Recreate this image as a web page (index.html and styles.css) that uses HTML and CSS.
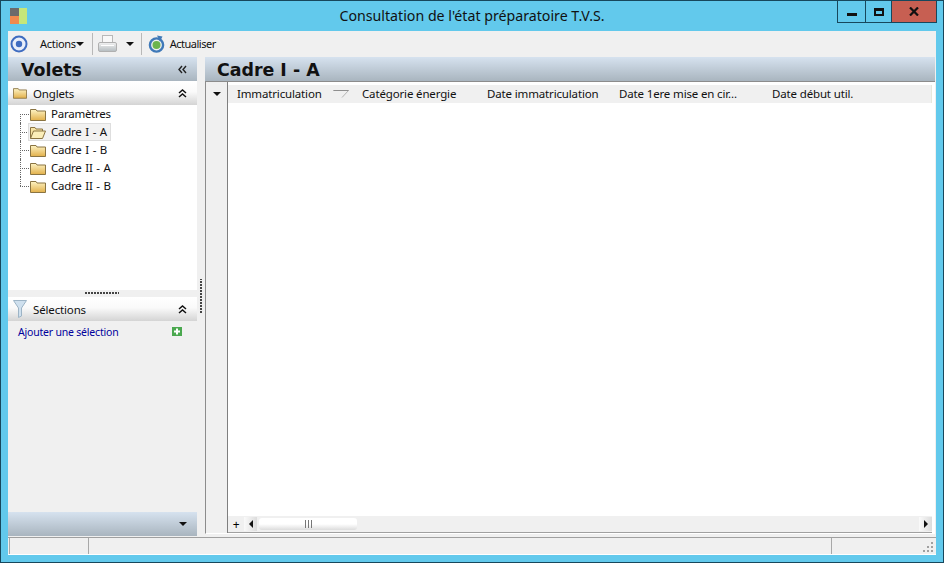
FILE: index.html
```html
<!DOCTYPE html>
<html lang="fr">
<head>
    <meta charset="UTF-8">
    <meta name="viewport" content="width=device-width, initial-scale=1.0">
    <title>Consultation de l'état préparatoire T.V.S.</title>
    <link rel="stylesheet" href="styles.css">
</head>
<body>
<svg class="defs" width="0" height="0">
    <defs>
        <linearGradient id="folderFill" x1="0" y1="0" x2="0" y2="1">
            <stop offset="0" stop-color="#fdf3c4"/>
            <stop offset="1" stop-color="#e2b04a"/>
        </linearGradient>
        <linearGradient id="printFill" x1="0" y1="0" x2="0" y2="1">
            <stop offset="0" stop-color="#f2f2f2"/>
            <stop offset="1" stop-color="#b4bcc0"/>
        </linearGradient>
        <symbol id="folder" viewBox="0 0 16 13">
            <path d="M0.5 12.5V1.5H6L7 3H15.5V12.5Z" fill="url(#folderFill)" stroke="#8a7442"/>
        </symbol>
        <symbol id="folderOpen" viewBox="0 0 16 13">
            <path d="M0.5 12.5V1.5H5L6 3H12.5V5" fill="#f6e3a4" stroke="#8a7442"/>
            <path d="M0.5 12.5L3.5 5H15.5L12.5 12.5Z" fill="#fbeeb9" stroke="#8a7442"/>
        </symbol>
        <symbol id="chevUp" viewBox="0 0 9 9">
            <path d="M1 4L4.5 1L8 4M1 8L4.5 5L8 8" fill="none" stroke="#111" stroke-width="1.5"/>
        </symbol>
    </defs>
</svg>

<div class="window">
    <!-- Title bar -->
    <div class="titlebar">
        <svg class="app-icon" width="17" height="16" viewBox="0 0 17 16">
            <rect x="0" y="0" width="9" height="8" fill="#6b6b6b"/>
            <rect x="0" y="8" width="9" height="8" fill="#f08a4e"/>
            <rect x="9" y="0" width="8" height="16" fill="#c6e67a"/>
        </svg>
        <div class="title">Consultation de l'état préparatoire T.V.S.</div>
        <div class="win-buttons">
            <div class="win-btn btn-min"><span class="min-glyph"></span></div>
            <div class="win-btn btn-max"><span class="max-glyph"></span></div>
            <div class="win-btn btn-close">
                <svg width="10" height="9" viewBox="0 0 10 9"><path d="M1 0.5L9 8.5M9 0.5L1 8.5" stroke="#111" stroke-width="2.2"/></svg>
            </div>
        </div>
    </div>

    <div class="client">
        <!-- Toolbar -->
        <div class="toolbar">
            <svg class="tb-target" width="18" height="18" viewBox="0 0 18 18">
                <circle cx="9" cy="9" r="7.5" fill="#e8eefa" stroke="#3f6cc0" stroke-width="2"/>
                <circle cx="9" cy="9" r="3.2" fill="#3f6cc0"/>
            </svg>
            <span class="tb-label tb-actions">Actions</span>
            <span class="arrow-down"></span>
            <span class="tb-sep"></span>
            <svg class="tb-print" width="19" height="18" viewBox="0 0 19 18">
                <rect x="4.5" y="0.5" width="10" height="7" fill="#f8f8f8" stroke="#b8b8b8"/>
                <rect x="0.5" y="7.5" width="18" height="9" rx="1.5" fill="url(#printFill)" stroke="#b0b0b0"/>
                <rect x="3" y="10" width="13" height="1" fill="#fff"/>
            </svg>
            <span class="arrow-down print-arrow"></span>
            <span class="tb-sep sep-two"></span>
            <svg class="tb-refresh" width="17" height="18" viewBox="0 0 17 18">
                <circle cx="8.5" cy="10" r="6.6" fill="none" stroke="#3f79b8" stroke-width="2.4"/>
                <path d="M9 0.5L14.5 1.5L12 6.5Z" fill="#3f79b8"/>
                <circle cx="8.5" cy="10" r="4" fill="#6cb44e"/>
            </svg>
            <span class="tb-label tb-refresh-label">Actualiser</span>
        </div>

        <div class="main">
            <!-- Left pane -->
            <aside class="left">
                <div class="pane-head">
                    <span class="pane-title">Volets</span>
                    <svg class="chev-left" width="9" height="9" viewBox="0 0 9 9"><path d="M4 1L1 4.5L4 8M8 1L5 4.5L8 8" fill="none" stroke="#222" stroke-width="1.4"/></svg>
                </div>
                <div class="section-head">
                    <svg class="section-icon" width="14" height="12"><use href="#folder"/></svg>
                    <span class="section-label">Onglets</span>
                    <svg class="chev-up" width="9" height="9"><use href="#chevUp"/></svg>
                </div>
                <ul class="tree">
                    <li class="tree-item"><span class="tree-row"><svg class="folder" width="16" height="13"><use href="#folder"/></svg><span class="tree-text">Paramètres</span></span></li>
                    <li class="tree-item active"><span class="tree-row"><svg class="folder" width="16" height="13"><use href="#folderOpen"/></svg><span class="tree-text">Cadre I - A</span></span></li>
                    <li class="tree-item"><span class="tree-row"><svg class="folder" width="16" height="13"><use href="#folder"/></svg><span class="tree-text">Cadre I - B</span></span></li>
                    <li class="tree-item"><span class="tree-row"><svg class="folder" width="16" height="13"><use href="#folder"/></svg><span class="tree-text">Cadre II - A</span></span></li>
                    <li class="tree-item"><span class="tree-row"><svg class="folder" width="16" height="13"><use href="#folder"/></svg><span class="tree-text">Cadre II - B</span></span></li>
                </ul>
                <div class="pane-grip"><span class="grip-dots"></span></div>
                <div class="section-head">
                    <svg class="section-icon funnel" width="14" height="18" viewBox="0 0 14 18">
                        <path d="M0.5 0.5H13.5L8.5 8V16L5.5 17.5V8Z" fill="#cfe0ee" stroke="#9db4c6"/>
                    </svg>
                    <span class="section-label">Sélections</span>
                    <svg class="chev-up" width="9" height="9"><use href="#chevUp"/></svg>
                </div>
                <div class="selections">
                    <span class="add-link">Ajouter une sélection</span>
                    <svg class="add-icon" width="10" height="9" viewBox="0 0 10 9">
                        <rect width="10" height="9" fill="#4aa84f"/>
                        <path d="M5 1.5V7.5M2 4.5H8" stroke="#fff" stroke-width="2"/>
                    </svg>
                </div>
                <div class="pane-foot"><span class="arrow-down"></span></div>
            </aside>

            <div class="splitter"><span class="split-dots"></span></div>

            <!-- Right pane -->
            <section class="right">
                <div class="content-head">Cadre I - A</div>
                <div class="grid">
                    <div class="grid-side">
                        <div class="side-top"><span class="arrow-down"></span></div>
                    </div>
                    <div class="grid-body">
                        <div class="grid-columns">
                            <span class="col col-immat">Immatriculation</span>
                            <svg class="sort-icon" width="16" height="8" viewBox="0 0 16 8"><path d="M0.5 0.5H15.5L9 7.5" fill="none" stroke="#b5b5b5"/><path d="M0.5 0.5H15.5" stroke="#8f8f8f"/></svg>
                            <span class="col col-cat">Catégorie énergie</span>
                            <span class="col col-date">Date immatriculation</span>
                            <span class="col col-mise">Date 1ere mise en cir...</span>
                            <span class="col col-debut">Date début util.</span>
                        </div>
                        <div class="grid-rows"></div>
                        <div class="grid-scroll">
                            <span class="add-row">+</span>
                            <span class="scroll-btn"><span class="arrow-left"></span></span>
                            <span class="scroll-thumb"><span class="thumb-lines"></span></span>
                            <span class="scroll-track"></span>
                            <span class="scroll-btn"><span class="arrow-right"></span></span>
                        </div>
                    </div>
                </div>
            </section>
        </div>

        <!-- Status bar -->
        <div class="statusbar">
            <div class="status-cell cell-a"></div>
            <div class="status-cell cell-b"></div>
            <div class="status-cell cell-c"></div>
            <svg class="size-grip" width="11" height="11" viewBox="0 0 11 11" fill="#a0a0a0">
                <rect x="8" y="0" width="2" height="2"/>
                <rect x="4" y="4" width="2" height="2"/><rect x="8" y="4" width="2" height="2"/>
                <rect x="0" y="8" width="2" height="2"/><rect x="4" y="8" width="2" height="2"/><rect x="8" y="8" width="2" height="2"/>
            </svg>
        </div>
    </div>
</div>
</body>
</html>
```

FILE: styles.css
```css
/* General */
html, body {
    margin: 0;
    padding: 0;
}

body {
    font-family: "Noto Sans", "Open Sans", sans-serif;
    font-size: 11.5px;
    letter-spacing: -0.15px;
    color: #111;
    overflow: hidden;
}

.defs {
    position: absolute;
}

.window {
    box-sizing: border-box;
    width: 944px;
    height: 563px;
    display: flex;
    flex-direction: column;
    padding: 0 7px 7px 7px;
    background-color: #62c9ec;
    border: 1px solid #17475c;
}

/* Title bar */
.titlebar {
    position: relative;
    height: 30px;
    flex: none;
    display: flex;
    align-items: flex-start;
}

.app-icon {
    margin: 7px 0 0 2px;
}

.title {
    position: absolute;
    left: 0;
    right: 0;
    top: 5px;
    text-align: center;
    font-size: 14.2px;
    letter-spacing: 0;
    line-height: 20px;
    color: #111;
}

.win-buttons {
    margin-left: auto;
    margin-right: -1px;
    display: flex;
    height: 21px;
    border: 1px solid #17475c;
    border-top: none;
}

.win-btn {
    display: flex;
    align-items: center;
    justify-content: center;
    height: 21px;
}

.btn-min {
    width: 27px;
    border-right: 1px solid #17475c;
}

.btn-max {
    width: 25px;
}

.btn-close {
    width: 44px;
    background-color: #c75f52;
    border-left: 1px solid #17475c;
}

.min-glyph {
    width: 10px;
    height: 3px;
    margin-top: 5px;
    background-color: #111;
}

.max-glyph {
    box-sizing: border-box;
    width: 10px;
    height: 8px;
    border: 2px solid #111;
    border-top-width: 3px;
}

/* Client area */
.client {
    flex: 1;
    min-height: 0;
    display: flex;
    flex-direction: column;
    background-color: #f0f0f0;
}

.toolbar {
    height: 26px;
    flex: none;
    display: flex;
    align-items: center;
}

.tb-label {
    font-size: 11px;
    letter-spacing: -0.3px;
    margin-top: -2px;
}

.tb-target {
    margin-left: 2px;
}

.tb-actions {
    margin-left: 12px;
}

.arrow-down {
    display: inline-block;
    width: 0;
    height: 0;
    border-left: 4px solid transparent;
    border-right: 4px solid transparent;
    border-top: 4px solid #111;
}

.tb-sep {
    width: 1px;
    height: 22px;
    margin-left: 8px;
    background-color: #b8b8b8;
}

.tb-print {
    margin-left: 5px;
}

.print-arrow {
    margin-left: 9px;
}

.sep-two {
    margin-left: 7px;
}

.tb-refresh {
    margin-left: 6px;
}

.tb-refresh-label {
    margin-left: 5px;
    letter-spacing: -0.5px;
}

.main {
    flex: 1;
    min-height: 0;
    display: flex;
}

/* Left pane */
.left {
    width: 189px;
    flex: none;
    display: flex;
    flex-direction: column;
}

.pane-head {
    height: 24px;
    flex: none;
    display: flex;
    align-items: center;
    justify-content: space-between;
    padding: 0 10px 0 13px;
    background: linear-gradient(#d6e2ef, #a9b5bf);
}

.pane-title {
    font-family: "DejaVu Sans", sans-serif;
    font-size: 17.4px;
    font-weight: bold;
    letter-spacing: 0;
    margin-top: 1px;
}

.section-head {
    height: 24px;
    flex: none;
    display: flex;
    align-items: center;
    padding: 0 10px 0 5px;
    background: linear-gradient(#ffffff, #fafafa 45%, #d4d4d4);
}

.section-icon {
    flex: none;
}

.section-label {
    margin-left: 6px;
    font-size: 11.5px;
}

.chev-up {
    margin-left: auto;
}

.tree {
    flex: 1;
    margin: 0;
    padding: 0;
    list-style: none;
    background-color: #fff;
}

.tree-item {
    position: relative;
    height: 18px;
    display: flex;
    padding-left: 20px;
}

/* Dotted tree connectors */
.tree-item::before {
    content: "";
    position: absolute;
    left: 12px;
    top: 0;
    bottom: 0;
    border-left: 1px dotted #666;
}

.tree-item:first-child::before {
    top: 9px;
}

.tree-item:last-child::before {
    bottom: 9px;
}

.tree-item::after {
    content: "";
    position: absolute;
    left: 12px;
    top: 9px;
    width: 9px;
    border-top: 1px dotted #666;
}

.tree-row {
    position: relative;
    z-index: 1;
    box-sizing: border-box;
    height: 18px;
    display: flex;
    align-items: center;
    padding: 0 3px 0 1px;
    border: 1px solid transparent;
}

.folder {
    flex: none;
}

.tree-text {
    margin-left: 5px;
    line-height: 16px;
    letter-spacing: -0.25px;
    word-spacing: 1px;
}

.active .tree-row {
    background-color: #f2f2f2;
    border-color: #dedede;
}

.pane-grip {
    height: 7px;
    flex: none;
    display: flex;
    justify-content: center;
    align-items: flex-start;
    background-color: #f0f0f0;
    padding-top: 2px;
    box-sizing: border-box;
}

.grip-dots {
    width: 34px;
    height: 2px;
    margin-left: -2px;
    background: repeating-linear-gradient(90deg, #444 0 2px, transparent 2px 3px);
}

.selections {
    flex: none;
    height: 191px;
    display: flex;
    align-items: flex-start;
    justify-content: space-between;
    padding: 4px 15px 0 10px;
    box-sizing: border-box;
}

.add-link {
    color: #00009c;
    font-size: 10.5px;
    letter-spacing: -0.2px;
}

.add-icon {
    margin-top: 2px;
}

.pane-foot {
    height: 24px;
    flex: none;
    display: flex;
    align-items: center;
    justify-content: flex-end;
    padding-right: 10px;
    background: linear-gradient(#d6e2ef, #a9b5bf);
}

.splitter {
    width: 8px;
    flex: none;
    position: relative;
}

.split-dots {
    position: absolute;
    left: 3px;
    top: 222px;
    width: 2px;
    height: 34px;
    background: repeating-linear-gradient(0deg, #444 0 2px, transparent 2px 3px);
}

/* Right pane */
.right {
    flex: 1;
    min-width: 0;
    display: flex;
    flex-direction: column;
    margin: 0 1px 2px 0;
}

.content-head {
    height: 25px;
    flex: none;
    box-sizing: border-box;
    padding-left: 12px;
    font-family: "DejaVu Sans", sans-serif;
    font-size: 17.4px;
    font-weight: bold;
    letter-spacing: 0;
    line-height: 26px;
    background: linear-gradient(#d6e2ef, #a9b5bf);
    border-bottom: 1px solid #8c8c8c;
}

.grid {
    flex: 1;
    min-height: 0;
    display: flex;
    background-color: #f0f0f0;
    border-left: 1px solid #8c8c8c;
    border-bottom: 1px solid #fff;
}

.grid-side {
    width: 21px;
    flex: none;
    border-right: 1px solid #7f7f7f;
}

.side-top {
    height: 23px;
    display: flex;
    align-items: center;
    justify-content: center;
}

.grid-body {
    flex: 1;
    min-width: 0;
    display: flex;
    flex-direction: column;
    background-color: #fff;
}

.grid-columns {
    position: relative;
    height: 18px;
    flex: none;
    margin-top: 3px;
    margin-right: 3px;
    background-color: #f0f0f0;
    border-right: 1px solid #e8e8dc;
}

.col {
    position: absolute;
    top: 0;
    line-height: 18px;
    white-space: nowrap;
}

.col-immat { left: 9px; }
.col-cat { left: 134px; }
.col-date { left: 259px; }
.col-mise { left: 391px; }
.col-debut { left: 544px; }

.sort-icon {
    position: absolute;
    left: 105px;
    top: 5px;
}

.grid-rows {
    flex: 1;
}

.grid-scroll {
    height: 16px;
    flex: none;
    display: flex;
    align-items: center;
    margin-right: 3px;
    background-color: #f0f0f0;
    border-bottom: 1px solid #a0a0a0;
}

.add-row {
    width: 16px;
    flex: none;
    text-align: center;
    font-size: 12px;
    line-height: 15px;
    color: #000;
}

.scroll-btn {
    width: 13px;
    height: 14px;
    flex: none;
    display: flex;
    align-items: center;
    justify-content: center;
    background: linear-gradient(90deg, #fafafa, #dcdcdc);
}

.arrow-left {
    width: 0;
    height: 0;
    border-top: 4px solid transparent;
    border-bottom: 4px solid transparent;
    border-right: 4px solid #111;
}

.arrow-right {
    width: 0;
    height: 0;
    border-top: 4px solid transparent;
    border-bottom: 4px solid transparent;
    border-left: 4px solid #111;
}

.scroll-thumb {
    width: 98px;
    height: 12px;
    flex: none;
    margin-left: 2px;
    display: flex;
    align-items: center;
    justify-content: center;
    border-radius: 3px;
    background: linear-gradient(#fff, #fff 50%, #dcdcdc);
}

.thumb-lines {
    width: 7px;
    height: 8px;
    background: repeating-linear-gradient(90deg, #777 0 1px, transparent 1px 3px);
}

.scroll-track {
    flex: 1;
}

/* Status bar */
.statusbar {
    position: relative;
    height: 18px;
    flex: none;
    display: flex;
    box-sizing: border-box;
    margin-top: 1px;
    border-top: 1px solid #a0a0a0;
    border-bottom: 1px solid #fff;
    padding-left: 1px;
}

.status-cell {
    height: 100%;
    border-left: 1px solid #a8a8a8;
}

.cell-a { width: 78px; }
.cell-b { flex: 1; }
.cell-c { width: 104px; }

.size-grip {
    position: absolute;
    right: 2px;
    bottom: 1px;
}
```
